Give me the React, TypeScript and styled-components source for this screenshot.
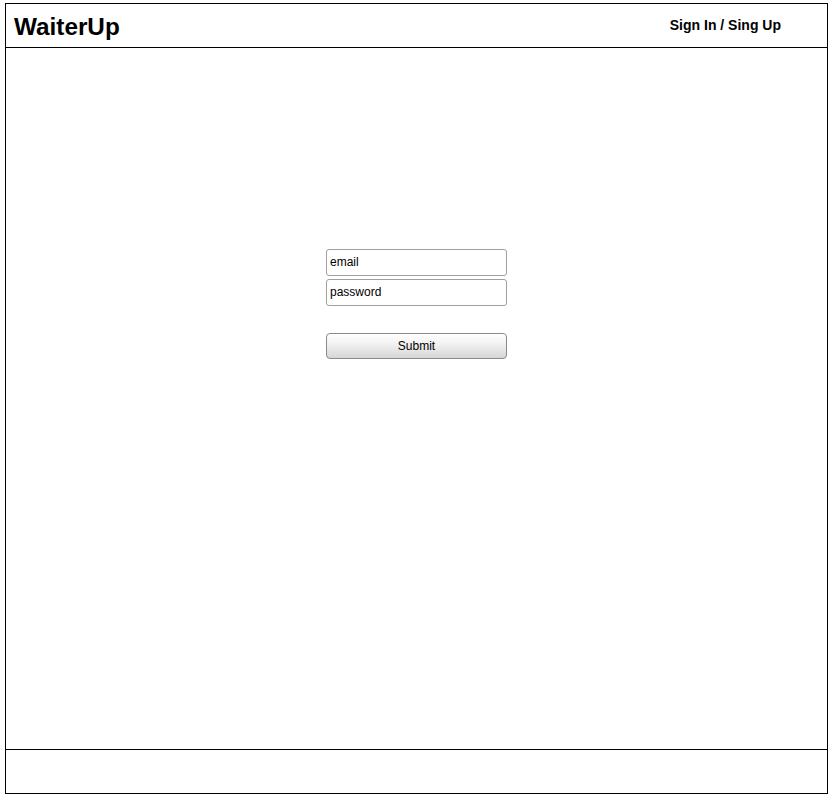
import React from "react";
import styled, { createGlobalStyle } from "styled-components";

const Global = createGlobalStyle`
  html, body { margin: 0; padding: 0; background: #fff; }
  body { font-family: "Liberation Sans", Arial, sans-serif; color: #000; }
`;

const Frame = styled.div`
  margin: 3px 4px 0 5px;
  width: 823px;
  height: 791px;
  box-sizing: border-box;
  border: 1px solid #000;
  display: flex;
  flex-direction: column;
`;

const Header = styled.header`
  height: 44px;
  box-sizing: border-box;
  border-bottom: 1px solid #000;
  display: flex;
  align-items: center;
  justify-content: space-between;
  padding: 0 46px 0 8px;
`;

const Logo = styled.h1`
  margin: 0;
  font-size: 24.3px;
  font-weight: bold;
  padding-top: 2px;
`;

const NavLink = styled.a`
  font-size: 14px;
  font-weight: bold;
  color: #000;
  text-decoration: none;
  padding-bottom: 2px;
`;

const Main = styled.main`
  flex: 1;
  display: flex;
  justify-content: center;
  padding-top: 201px;
`;

const Form = styled.form`
  width: 181px;
  display: flex;
  flex-direction: column;
  gap: 3px;
`;

const Field = styled.input`
  width: 181px;
  height: 27px;
  box-sizing: border-box;
  border: 1px solid #a0a0a0;
  border-radius: 3px;
  padding: 0 3px 2px;
  font-family: "Liberation Sans", Arial, sans-serif;
  font-size: 12px;
  color: #000;
  outline: none;
  &::placeholder { color: #000; opacity: 1; }
`;

const SubmitButton = styled.button`
  margin-top: 24px;
  width: 181px;
  height: 26px;
  box-sizing: border-box;
  border: 1px solid #8a8a8a;
  border-radius: 4px;
  background: linear-gradient(#ffffff, #f2f2f2 40%, #d6d6d6);
  font-family: "Liberation Sans", Arial, sans-serif;
  font-size: 12px;
  color: #000;
  padding: 0;
`;

const Footer = styled.footer`
  height: 43px;
  border-top: 1px solid #000;
`;

export default function App() {
  return (
    <>
      <Global />
      <Frame>
        <Header>
          <Logo>WaiterUp</Logo>
          <NavLink href="#">Sign In / Sing Up</NavLink>
        </Header>
        <Main>
          <Form onSubmit={(e) => e.preventDefault()}>
            <Field type="text" placeholder="email" />
            <Field type="password" placeholder="password" />
            <SubmitButton type="submit">Submit</SubmitButton>
          </Form>
        </Main>
        <Footer />
      </Frame>
    </>
  );
}
